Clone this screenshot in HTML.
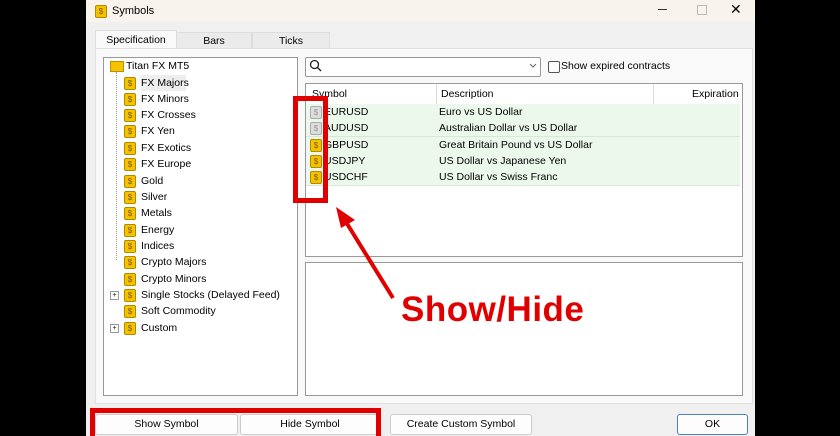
<!DOCTYPE html><html><head><style>
body{margin:0;width:840px;height:436px;background:#000;position:relative;overflow:hidden;font-family:"Liberation Sans",sans-serif;font-size:10.5px;color:#000}
.a{position:absolute}
.win{left:86px;top:0;width:669px;height:436px;background:#f0f0f0}
.ico{display:inline-block;width:10px;height:11px;background:#f6c200;border:1px solid #b08a00;border-radius:2px;font-size:8px;line-height:11px;text-align:center;color:#7a5a00;vertical-align:middle}
.g{background:#ddd;border-color:#aaa;color:#999}
.tr{position:absolute;left:124px;height:16px;line-height:16px;white-space:nowrap}
.tr .ico{margin-right:5px}
.row{position:absolute;left:306px;width:434px;height:16px;background:#ecf8ec;border-bottom:1px solid #d8e8d8;line-height:16px}
.btn{position:absolute;top:414px;height:19px;background:#fdfdfd;border:1px solid #ccc;border-radius:3px;text-align:center;line-height:19px}
</style></head><body>
<div class="a win"></div>
<div class="a" style="left:86px;top:0;width:669px;height:22px;background:#f9f3ee"></div>
<div class="a" style="left:95px;top:5px"><span class="ico">$</span></div>
<div class="a" style="left:112px;top:5px;font-size:11px">Symbols</div>
<div class="a" style="left:658px;top:9px;width:9px;height:1px;background:#333"></div>
<div class="a" style="left:697px;top:5px;width:8px;height:8px;border:1px solid #bbb"></div>
<div class="a" style="left:730px;top:1px;font-size:14px">✕</div>
<div class="a" style="left:95px;top:30px;width:80px;height:19px;background:#f9f9f9;border:1px solid #ddd;border-bottom:none;text-align:center;line-height:18px">Specification</div>
<div class="a" style="left:176px;top:32px;width:74px;height:16px;background:#ebebeb;border:1px solid #ddd;text-align:center;line-height:16px">Bars</div>
<div class="a" style="left:252px;top:32px;width:76px;height:16px;background:#ebebeb;border:1px solid #ddd;text-align:center;line-height:16px">Ticks</div>
<div class="a" style="left:95px;top:48px;width:656px;height:354px;background:#f9f9f9;border:1px solid #e0e0e0"></div>
<div class="a" style="left:103px;top:57px;width:193px;height:337px;background:#fff;border:1px solid #999"></div>
<div class="a" style="left:110px;top:61px;width:12px;height:9px;background:#f5c400;border:1px solid #c09000"></div>
<div class="tr" style="left:126px;top:58px">Titan FX MT5</div>
<div class="a" style="left:116px;top:72px;width:0;height:188px;border-left:1px dotted #999"></div>
<div class="a" style="left:141px;top:75px;width:45px;height:16px;background:#eee"></div>
<div class="tr" style="top:75px"><span class="ico">$</span>FX Majors</div>
<div class="tr" style="top:91px"><span class="ico">$</span>FX Minors</div>
<div class="tr" style="top:107px"><span class="ico">$</span>FX Crosses</div>
<div class="tr" style="top:123px"><span class="ico">$</span>FX Yen</div>
<div class="tr" style="top:140px"><span class="ico">$</span>FX Exotics</div>
<div class="tr" style="top:156px"><span class="ico">$</span>FX Europe</div>
<div class="tr" style="top:173px"><span class="ico">$</span>Gold</div>
<div class="tr" style="top:189px"><span class="ico">$</span>Silver</div>
<div class="tr" style="top:205px"><span class="ico">$</span>Metals</div>
<div class="tr" style="top:222px"><span class="ico">$</span>Energy</div>
<div class="tr" style="top:238px"><span class="ico">$</span>Indices</div>
<div class="tr" style="top:254px"><span class="ico">$</span>Crypto Majors</div>
<div class="tr" style="top:271px"><span class="ico">$</span>Crypto Minors</div>
<div class="tr" style="top:287px"><span class="ico">$</span>Single Stocks (Delayed Feed)</div>
<div class="tr" style="top:303px"><span class="ico">$</span>Soft Commodity</div>
<div class="tr" style="top:320px"><span class="ico">$</span>Custom</div>
<div class="a" style="left:110px;top:291px;width:7px;height:7px;border:1px solid #999;font-size:7px;line-height:7px;text-align:center">+</div>
<div class="a" style="left:110px;top:324px;width:7px;height:7px;border:1px solid #999;font-size:7px;line-height:7px;text-align:center">+</div>
<div class="a" style="left:305px;top:57px;width:234px;height:18px;background:#fff;border:1px solid #999;border-radius:2px"></div>
<svg class="a" style="left:309px;top:59px" width="14" height="14"><circle cx="5.5" cy="5.5" r="4" fill="none" stroke="#222" stroke-width="1.3"/><line x1="8.5" y1="8.5" x2="12" y2="12" stroke="#222" stroke-width="1.4"/></svg>
<svg class="a" style="left:529px;top:63px" width="8" height="6"><polyline points="1,1 4,4 7,1" fill="none" stroke="#666"/></svg>
<div class="a" style="left:548px;top:61px;width:10px;height:10px;border:1px solid #555;border-radius:2px;background:#fff"></div>
<div class="a" style="left:561px;top:60px">Show expired contracts</div>
<div class="a" style="left:305px;top:83px;width:436px;height:172px;background:#fff;border:1px solid #999"></div>
<div class="a" style="left:312px;top:88px">Symbol</div>
<div class="a" style="left:436px;top:84px;width:1px;height:101px;background:#ddd"></div>
<div class="a" style="left:653px;top:84px;width:1px;height:101px;background:#ddd"></div>
<div class="a" style="left:441px;top:88px">Description</div>
<div class="a" style="left:692px;top:88px">Expiration</div>
<div class="row" style="top:104px"><span style="position:absolute;left:4px"><span class="ico g">$</span></span><span style="position:absolute;left:18px">EURUSD</span><span style="position:absolute;left:133px">Euro vs US Dollar</span></div>
<div class="row" style="top:120px"><span style="position:absolute;left:4px"><span class="ico g">$</span></span><span style="position:absolute;left:18px">AUDUSD</span><span style="position:absolute;left:133px">Australian Dollar vs US Dollar</span></div>
<div class="row" style="top:137px"><span style="position:absolute;left:4px"><span class="ico">$</span></span><span style="position:absolute;left:18px">GBPUSD</span><span style="position:absolute;left:133px">Great Britain Pound vs US Dollar</span></div>
<div class="row" style="top:153px"><span style="position:absolute;left:4px"><span class="ico">$</span></span><span style="position:absolute;left:18px">USDJPY</span><span style="position:absolute;left:133px">US Dollar vs Japanese Yen</span></div>
<div class="row" style="top:169px"><span style="position:absolute;left:4px"><span class="ico">$</span></span><span style="position:absolute;left:18px">USDCHF</span><span style="position:absolute;left:133px">US Dollar vs Swiss Franc</span></div>
<div class="a" style="left:305px;top:262px;width:436px;height:132px;background:#fff;border:1px solid #999"></div>
<div class="btn" style="left:95px;width:141px">Show Symbol</div>
<div class="btn" style="left:240px;width:138px">Hide Symbol</div>
<div class="btn" style="left:390px;width:140px">Create Custom Symbol</div>
<div class="btn" style="left:677px;width:69px;border-color:#4a7fc0">OK</div>
<div class="a" style="left:293px;top:96px;width:25px;height:97px;border:5px solid #e00000"></div>
<div class="a" style="left:90px;top:408px;width:281px;height:23px;border:5px solid #e00000;border-bottom:none"></div>
<svg class="a" style="left:0;top:0" width="840" height="436"><line x1="393" y1="298" x2="346" y2="222" stroke="#e00000" stroke-width="4"/><polygon points="336,207 355,220 341,228" fill="#e00000"/></svg>
<div class="a" style="left:401px;top:290px;font-size:35px;font-weight:bold;color:#e00000;letter-spacing:0.5px">Show/Hide</div>
</body></html>
